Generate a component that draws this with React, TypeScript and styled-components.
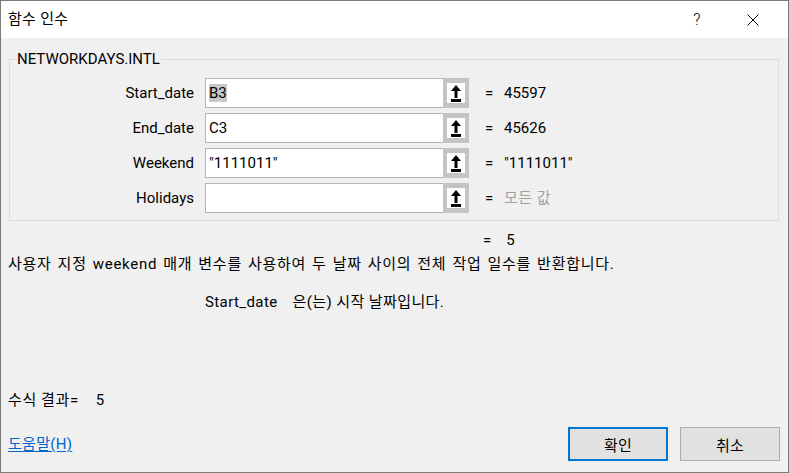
import React from "react";
import styled, { createGlobalStyle } from "styled-components";

const Global = createGlobalStyle`
  html, body { margin: 0; padding: 0; background: #f0f0f0; }
  body { font-family: Roboto, "Noto Sans CJK KR", sans-serif; color: #000; }
  * { box-sizing: border-box; }
`;

const Window = styled.div`
  width: 789px;
  height: 473px;
  border: 1px solid #7a7a7a;
  background: #f0f0f0;
  display: flex;
  flex-direction: column;
  font-size: 15px;
  line-height: 18px;
`;

const TitleBar = styled.div`
  height: 37px;
  background: #fff;
  display: flex;
  align-items: center;
  padding-left: 7px;
  padding-right: 12px;
`;

const TitleText = styled.div`
  flex: 1;
  font-size: 15px;
  margin-top: -1px;
  letter-spacing: 0.3px;
`;

const TitleButton = styled.div<{ $w: number }>`
  width: ${(p) => p.$w}px;
  height: 37px;
  display: flex;
  align-items: center;
  justify-content: center;
  font-size: 16px;
  font-weight: 300;
`;

const Body = styled.div`
  flex: 1;
  display: flex;
  flex-direction: column;
  padding: 12px 9px 11px 7px;
`;

const Group = styled.fieldset`
  margin: 0 0 0 1px;
  padding: 10px 0 7px 0;
  border: 1px solid #dcdcdc;
  min-width: 0;
`;

const Legend = styled.legend`
  padding: 0 1px;
  margin-left: 6px;
  font-size: 15px;
  line-height: 18px;
`;

const ArgGrid = styled.div`
  display: grid;
  grid-template-columns: 195px 264px 35px 1fr;
  grid-auto-rows: 30px;
  row-gap: 5px;
  align-items: center;
`;

const Label = styled.div`
  text-align: right;
  padding-right: 11px;
`;

const Field = styled.div`
  display: flex;
  height: 30px;
`;

const FieldInput = styled.div`
  flex: 1;
  background: #fff;
  border: 1px solid #b4b4b4;
  border-right: none;
  padding: 0 3px;
  display: flex;
  align-items: center;
`;

const Selected = styled.span`
  background: #c8c8c8;
`;

const RefButton = styled.div`
  width: 26px;
  height: 30px;
  background: #fff;
  border-style: solid;
  border-color: #c4c4c4;
  border-width: 5px 4px 5px 4px;
  display: flex;
  align-items: center;
  justify-content: center;
`;

const Eq = styled.div`
  padding-left: 16px;
`;

const Value = styled.div<{ $muted?: boolean }>`
  color: ${(p) => (p.$muted ? "#a0a0a0" : "#000")};
  letter-spacing: ${(p) => (p.$muted ? "0.5px" : "0")};
`;

const ResultLine = styled.div`
  margin-top: 10px;
  padding-left: 475px;
  display: flex;
  gap: 15px;
`;

const Desc = styled.div`
  margin-top: 6px;
  letter-spacing: 0.75px;
  word-spacing: 1.5px;
`;

const ArgDesc = styled.div`
  margin-top: 20px;
  padding-left: 197px;
  display: flex;
  gap: 15px;
  letter-spacing: 0.4px;
`;

const Spacer = styled.div`
  flex: 1;
`;

const FormulaResult = styled.div`
  display: flex;
  gap: 17px;
  letter-spacing: 0.6px;
`;

const Footer = styled.div`
  margin-top: 18px;
  margin-right: -1px;
  display: flex;
  align-items: center;
  gap: 12px;
`;

const HelpLink = styled.a`
  flex: 1;
  color: #0066cc;
  text-decoration: underline;
  text-underline-offset: 2px;
  letter-spacing: 0.3px;
  cursor: pointer;
`;

const Button = styled.button<{ $default?: boolean }>`
  width: 100px;
  height: 34px;
  background: #e1e1e1;
  border: ${(p) => (p.$default ? "2px solid #0078d7" : "1px solid #adadad")};
  font-family: inherit;
  font-size: 15px;
  color: #000;
  padding: 0;
  letter-spacing: 0.3px;
`;

const ArrowIcon = () => (
  <svg width="10" height="17" viewBox="0 0 10 17">
    <path d="M5 0 L10 6 L6.5 6 L6.5 13 L3.5 13 L3.5 6 L0 6 Z" fill="#000" />
    <rect x="0" y="14" width="10" height="3" fill="#000" />
  </svg>
);

const CloseIcon = () => (
  <svg width="12" height="12" viewBox="0 0 12 12">
    <path d="M0.5 0.5 L11.5 11.5 M11.5 0.5 L0.5 11.5" stroke="#000" strokeWidth="1" />
  </svg>
);

type Arg = { name: string; input: React.ReactNode; value: string; muted?: boolean };

const args: Arg[] = [
  { name: "Start_date", input: <Selected>B3</Selected>, value: "45597" },
  { name: "End_date", input: "C3", value: "45626" },
  { name: "Weekend", input: '"1111011"', value: '"1111011"' },
  { name: "Holidays", input: "", value: "모든 값", muted: true },
];

export default function App() {
  return (
    <>
      <Global />
      <Window>
        <TitleBar>
          <TitleText>함수 인수</TitleText>
          <TitleButton $w={66}>?</TitleButton>
          <TitleButton $w={46}>
            <CloseIcon />
          </TitleButton>
        </TitleBar>
        <Body>
          <Group>
            <Legend>NETWORKDAYS.INTL</Legend>
            <ArgGrid>
              {args.map((a) => (
                <React.Fragment key={a.name}>
                  <Label>{a.name}</Label>
                  <Field>
                    <FieldInput>{a.input}</FieldInput>
                    <RefButton>
                      <ArrowIcon />
                    </RefButton>
                  </Field>
                  <Eq>=</Eq>
                  <Value $muted={a.muted}>{a.value}</Value>
                </React.Fragment>
              ))}
            </ArgGrid>
          </Group>
          <ResultLine>
            <span>=</span>
            <span>5</span>
          </ResultLine>
          <Desc>사용자 지정 weekend 매개 변수를 사용하여 두 날짜 사이의 전체 작업 일수를 반환합니다.</Desc>
          <ArgDesc>
            <span>Start_date</span>
            <span>은(는) 시작 날짜입니다.</span>
          </ArgDesc>
          <Spacer />
          <FormulaResult>
            <span>수식 결과=</span>
            <span>5</span>
          </FormulaResult>
          <Footer>
            <HelpLink>도움말(H)</HelpLink>
            <Button $default>확인</Button>
            <Button>취소</Button>
          </Footer>
        </Body>
      </Window>
    </>
  );
}
